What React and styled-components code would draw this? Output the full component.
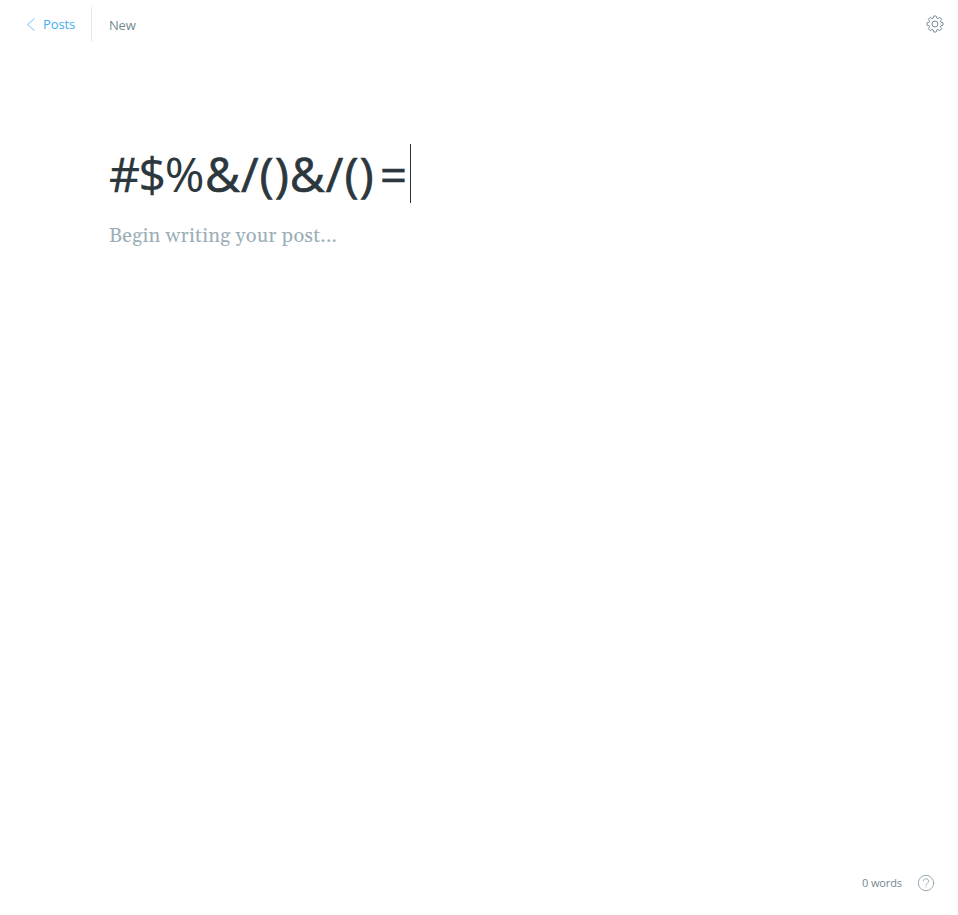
import React from "react";
import styled, { createGlobalStyle } from "styled-components";

const GlobalStyle = createGlobalStyle`
  * { box-sizing: border-box; }
  body { margin: 0; background: #fff; font-family: "Open Sans", "Noto Sans", sans-serif; }
`;
const Page = styled.div`
  height: 915px;
  display: flex;
  flex-direction: column;
`;
const Header = styled.header`
  height: 48px;
  padding: 7px 14px 6px 25px;
  display: flex;
  align-items: center;
`;
const BackLink = styled.a`
  display: flex;
  align-items: center;
  gap: 6px;
  height: 35px;
  width: 67px;
  padding-bottom: 2px;
  border-right: 1px solid #dfebf2;
  color: #3eaef0;
  font-size: 13px;
  letter-spacing: -0.1px;
`;
const BackIcon = styled.svg`
  opacity: 0.75;
`;
const Status = styled.span`
  margin-left: 17px;
  font-size: 13px;
  letter-spacing: -0.2px;
  color: #738a94;
`;
const SettingsButton = styled.button`
  display: flex;
  margin: 0 0 1px auto;
  padding: 0;
  border: 0;
  background: none;
  color: #738a94;
`;
const Editor = styled.main`
  flex: 1;
  padding: 96px 109px 0;
`;
const TitleRow = styled.div`
  display: flex;
  width: 302px;
  height: 59px;
  justify-content: space-between;
`;
const Title = styled.h1`
  margin: 0;
  font-size: 48px;
  line-height: 59px;
  font-weight: 500;
  white-space: nowrap;
  color: #2b373d;
`;
const Run = styled.span`
  -webkit-text-stroke: ${(p) => p.$stroke}px currentColor;
  letter-spacing: ${(p) => p.$spacing}px;
  margin-left: ${(p) => p.$gap || 0}px;
`;
const Caret = styled.span`
  width: 1px;
  background: #263238;
`;
const Body = styled.p`
  margin: 17px 0 0;
  font: 20px/32px Gelasio, Georgia, "Liberation Serif", serif;
  letter-spacing: 0.2px;
  color: #9baeb8;
`;
const Footer = styled.footer`
  display: flex;
  align-items: center;
  justify-content: flex-end;
  gap: 15px;
  height: 64px;
  padding-right: 23px;
  color: #738a94;
`;
const WordCount = styled.span`
  padding-bottom: 2px;
  font-size: 11px;
  letter-spacing: -0.1px;
`;
const HelpIcon = styled.svg`
  color: #9aabb4;
`;

const polar = (radius, degrees) => {
  const angle = (degrees * Math.PI) / 180;
  return `${(9 + radius * Math.cos(angle)).toFixed(2)} ${(9 + radius * Math.sin(angle)).toFixed(2)}`;
};
// Eight rounded teeth joined by concave valleys.
const gearPath =
  Array.from({ length: 8 }, (_, i) => {
    const a = i * 45;
    return `${i ? "L" : "M"}${polar(7.9, a - 11)}Q${polar(8.5, a)} ${polar(7.9, a + 11)}Q${polar(3.9, a + 22.5)} ${polar(7.9, a + 34)}`;
  }).join("") + "Z";

export default function App() {
  return (
    <Page>
      <GlobalStyle />
      <Header>
        <BackLink>
          <BackIcon width="12" height="14" viewBox="0 0 12 14" fill="none" stroke="currentColor">
            <path d="M9.5 1.5 2.5 7.5l7 6" />
          </BackIcon>
          Posts
        </BackLink>
        <Status>New</Status>
        <SettingsButton aria-label="Settings">
          <svg width="18" height="18" viewBox="0 0 18 18" fill="none" stroke="currentColor" strokeLinejoin="round">
            <path d={gearPath} />
            <circle cx="9" cy="9" r="3" />
          </svg>
        </SettingsButton>
      </Header>
      <Editor>
        <TitleRow>
          <Title>
            <Run $stroke={0.3} $spacing={-1.4}>#$</Run>
            <Run $stroke={0.1} $spacing={-1.4}>%</Run>
            <Run $stroke={0.7} $spacing={1} $gap={2}>&amp;/()</Run>
            <Run $stroke={0.7} $spacing={1}>&amp;/()</Run>
            <Run $stroke={0.3} $spacing={0} $gap={5}>=</Run>
          </Title>
          <Caret />
        </TitleRow>
        <Body>Begin writing your post...</Body>
      </Editor>
      <Footer>
        <WordCount>0 words</WordCount>
        <HelpIcon width="18" height="18" viewBox="0 0 18 18" fill="none" stroke="currentColor" strokeLinecap="round">
          <circle cx="9" cy="9" r="7.7" />
          <path d="M6.3 7.2c0-3.4 5.4-3.2 5.4 0C11.7 9.2 9 9 9 11M9 13v.1" />
        </HelpIcon>
      </Footer>
    </Page>
  );
}
